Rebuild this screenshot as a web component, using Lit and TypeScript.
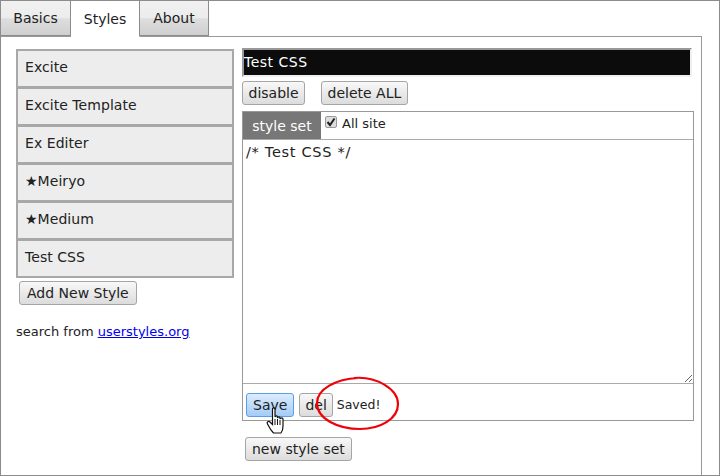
import { LitElement, html, css } from "lit";
import { customElement } from "lit/decorators.js";

@customElement("app-root")
export class AppRoot extends LitElement {
  static styles = css`
    :host { display: block; width: 720px; height: 476px; font-family: "DejaVu Sans", "Open Sans", sans-serif; font-size: 14px; color: #222; }
    * { box-sizing: border-box; }
    .frame { position: relative; width: 720px; height: 476px; border: 1px solid #8c8c8c; background: #fff; overflow: hidden; display: flex; flex-direction: column; }
    .tabs { display: flex; flex: none; width: 701px; height: 36px; border-bottom: 1px solid #999; }
    .tab { width: 69px; height: 35px; display: flex; align-items: center; justify-content: center; background: linear-gradient(#f1f1f1 0, #ececec 50%, #dedede 52%, #cfcfcf 100%); border-right: 1px solid #8c8c8c; border-bottom: 1px solid #8c8c8c; }
    .tab:first-child { width: 70px; }
    .tab.on { background: #fff; border-bottom: 1px solid #fff; height: 36px; }
    .panel { flex: 1; width: 701px; display: flex; gap: 8px; padding: 11px 0 0 15px; border-right: 1px solid #999; }
    .left { width: 218px; padding-top: 1px; flex: none; }
    .item { display: flex; align-items: center; padding: 0 0 4px 7px; height: 39px; background: #ededed; border: 2px solid #a8a8a8; margin-bottom: -1px; letter-spacing: 0.05px; }
    button { font: inherit; color: #222; height: 24px; padding: 0 6px; background: linear-gradient(#f8f8f8, #dcdcdc); border: 1px solid #a5a5a5; border-radius: 3px; white-space: nowrap; }
    .add { margin: 4px 0 0 3px; padding: 0 7px; }
    .search { margin-top: 19px; font-size: 13px; }
    a { color: #00e; }
    .right { width: 452px; flex: none; }
    .title { width: 450px; height: 29px; background: #0c0c0c; color: #fff; border: 2px solid #999; border-right-color: #f0f0f0; border-bottom-color: #f0f0f0; line-height: 25px; letter-spacing: 0.5px; }
    .acts { display: flex; gap: 16px; margin-top: 4px; }
    .acts button { padding: 0 5.5px; }
    .set { margin-top: 6px; border: 1px solid #999; height: 310px; display: flex; flex-direction: column; }
    .sethead { display: flex; height: 28px; border-bottom: 1px solid #aaa; flex: none; }
    .name { background: #777; color: #fff; width: 78px; display: flex; align-items: center; justify-content: center; }
    .site { display: flex; align-items: flex-start; font-size: 13px; padding: 4px 0 0 4px; gap: 5px; line-height: 16px; }
    .cb { width: 12px; height: 12px; border: 1px solid #999; background: #ddd; border-radius: 2px; display: block; }
    .cb svg { display: block; }
    textarea { display: block; flex: none; width: 100%; height: 244px; border: 0; border-bottom: 1px solid #aaa; padding: 4px 3px; font: inherit; font-size: 14.5px; letter-spacing: 0.7px; color: #222; outline: none; }
    .savebar { display: flex; align-items: flex-start; padding: 9px 0 0 3px; gap: 5px; height: 36px; }
    .save { background: linear-gradient(#dcecfd, #a3ccf7); border-color: #5b9de6; }
    .del { padding: 0 5px; }
    .msg { font-size: 12.5px; margin-left: -1px; line-height: 24px; }
    .newset { margin: 16px 0 0 3px; display: block; }
    .mark { position: absolute; pointer-events: none; }
  `;
  render() {
    return html`<div class="frame">
      <div class="tabs"><div class="tab">Basics</div><div class="tab on">Styles</div><div class="tab">About</div></div>
      <div class="panel">
        <div class="left">
          ${["Excite","Excite Template","Ex Editer","★Meiryo","★Medium","Test CSS"].map(n=>html`<div class="item">${n}</div>`)}
          <button class="add">Add New Style</button>
          <div class="search">search from <a href="#">userstyles.org</a></div>
        </div>
        <div class="right">
          <div class="title">Test CSS</div>
          <div class="acts"><button>disable</button><button>delete ALL</button></div>
          <div class="set">
            <div class="sethead"><div class="name">style set</div><div class="site"><span class="cb"><svg width="10" height="10" viewBox="0 0 10 10"><path d="M1.5 5 L4 8 L8.5 1.5" fill="none" stroke="#222" stroke-width="2"/></svg></span>All site</div></div>
            <textarea .value=${"/* Test CSS */"}></textarea>
            <div class="savebar"><button class="save">Save</button><button class="del">del</button><span class="msg">Saved!</span></div>
          </div>
          <button class="newset">new style set</button>
        </div>
      </div>
      <svg class="mark" style="left:313px;top:374px" width="88" height="58" viewBox="0 0 88 58"><path d="M40 3 C62 1 84 14 84 29 C84 44 66 54 46 54 C24 54 3 44 3 28 C3 14 22 4 44 3" fill="none" stroke="#f00008" stroke-width="2.2"/></svg>
      <svg class="mark" style="left:265px;top:406px" width="22" height="28" viewBox="0 0 22 28"><path d="M6.5 2 C6.5 0.5 9 0.5 9 2 L9 10 C9.5 8.5 11.5 8.5 11.5 10 L11.5 11 C12 9.5 14 9.5 14 11 L14 12 C14.5 10.5 17 10.5 17 12 L17 19 C17 22 16.5 24 15 26 L7.5 26 C5.5 24 3 20 1.5 17 C0.5 15 2.5 13.5 4 15 L6.5 17.5 Z" fill="#fff" stroke="#111" stroke-width="1.2"/><path d="M9 12v6M11.5 12v6M14 13v5" stroke="#111" stroke-width="1"/></svg>
    </div>`;
  }
}
